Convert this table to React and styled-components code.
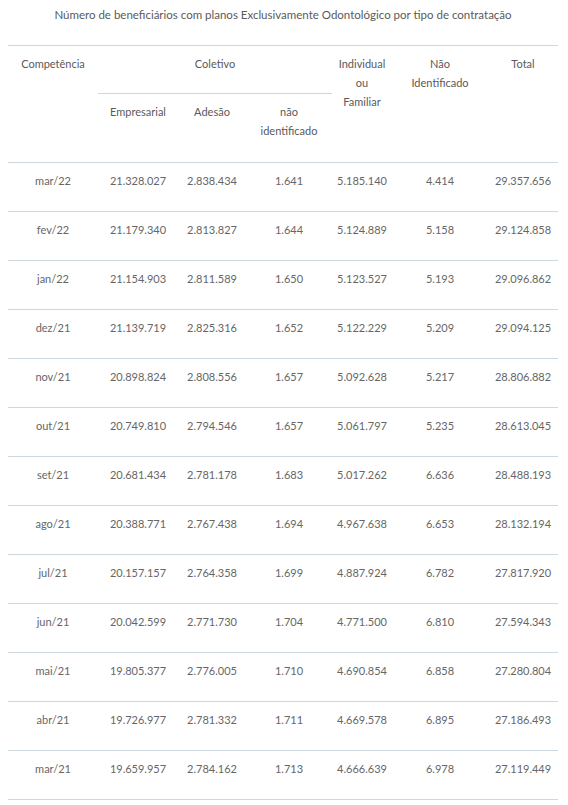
import React from "react";
import styled, { createGlobalStyle } from "styled-components";

const GlobalStyle = createGlobalStyle`
  body {
    margin: 8px;
    background: #fff;
    font-family: Lato, "Open Sans", sans-serif;
    color: #555;
  }
`;

const Wrapper = styled.div`
  width: 550px;
`;

const Title = styled.div`
  font-size: 11.5px;
  line-height: 13px;
  text-align: center;
  color: #5a5a5a;
  margin: 0 0 24px;
`;

const Table = styled.table`
  width: 550px;
  border-collapse: collapse;
  table-layout: fixed;
  font-size: 11px;
`;

const HeadRow = styled.tr`
  border-top: ${(p) => (p.$first ? "1px solid #cdd8de" : "none")};
`;

const Th = styled.th`
  font-weight: 400;
  color: #5a5a5a;
  text-align: center;
  vertical-align: top;
  line-height: 19px;
  padding: 8px 4px ${(p) => (p.$sub ? "22px" : "20px")};
  border-bottom: ${(p) => (p.$line ? "1px solid #cdd8de" : "none")};
`;

const Td = styled.td`
  color: #666;
  text-align: center;
  line-height: 19px;
  padding: 8px 4px 21px;
  border-bottom: 1px solid #cdd8de;
`;

const BodyRow = styled.tr``;

const rows = [
  ["mar/22", "21.328.027", "2.838.434", "1.641", "5.185.140", "4.414", "29.357.656"],
  ["fev/22", "21.179.340", "2.813.827", "1.644", "5.124.889", "5.158", "29.124.858"],
  ["jan/22", "21.154.903", "2.811.589", "1.650", "5.123.527", "5.193", "29.096.862"],
  ["dez/21", "21.139.719", "2.825.316", "1.652", "5.122.229", "5.209", "29.094.125"],
  ["nov/21", "20.898.824", "2.808.556", "1.657", "5.092.628", "5.217", "28.806.882"],
  ["out/21", "20.749.810", "2.794.546", "1.657", "5.061.797", "5.235", "28.613.045"],
  ["set/21", "20.681.434", "2.781.178", "1.683", "5.017.262", "6.636", "28.488.193"],
  ["ago/21", "20.388.771", "2.767.438", "1.694", "4.967.638", "6.653", "28.132.194"],
  ["jul/21", "20.157.157", "2.764.358", "1.699", "4.887.924", "6.782", "27.817.920"],
  ["jun/21", "20.042.599", "2.771.730", "1.704", "4.771.500", "6.810", "27.594.343"],
  ["mai/21", "19.805.377", "2.776.005", "1.710", "4.690.854", "6.858", "27.280.804"],
  ["abr/21", "19.726.977", "2.781.332", "1.711", "4.669.578", "6.895", "27.186.493"],
  ["mar/21", "19.659.957", "2.784.162", "1.713", "4.666.639", "6.978", "27.119.449"],
];

const widths = [90, 80, 68, 86, 60, 96, 70];

export default function App() {
  return (
    <Wrapper>
      <GlobalStyle />
      <Title>
        Número de beneficiários com planos Exclusivamente Odontológico por tipo de contratação
      </Title>
      <Table>
        <colgroup>
          {widths.map((w, i) => (
            <col key={i} style={{ width: w }} />
          ))}
        </colgroup>
        <thead>
          <HeadRow $first>
            <Th rowSpan={2} $line>Competência</Th>
            <Th colSpan={3} $line>Coletivo</Th>
            <Th rowSpan={2} $line>
              Individual
              <br />
              ou
              <br />
              Familiar
            </Th>
            <Th rowSpan={2} $line>
              Não
              <br />
              Identificado
            </Th>
            <Th rowSpan={2} $line>Total</Th>
          </HeadRow>
          <HeadRow>
            <Th $sub $line>Empresarial</Th>
            <Th $sub $line>Adesão</Th>
            <Th $sub $line>
              não
              <br />
              identificado
            </Th>
          </HeadRow>
        </thead>
        <tbody>
          {rows.map((r) => (
            <BodyRow key={r[0]}>
              {r.map((c, i) => (
                <Td key={i}>{c}</Td>
              ))}
            </BodyRow>
          ))}
        </tbody>
      </Table>
    </Wrapper>
  );
}
